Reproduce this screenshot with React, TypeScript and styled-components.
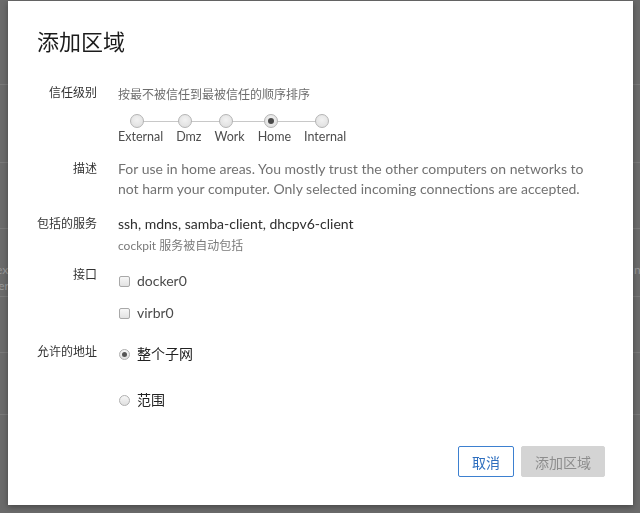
import styled, { createGlobalStyle } from "styled-components";

const GlobalStyle = createGlobalStyle`
  html, body {
    margin: 0;
    padding: 0;
    width: 640px;
    height: 513px;
    overflow: hidden;
  }
  body {
    font-family: Lato, "Noto Sans CJK SC", sans-serif;
  }
`;

const zones = ["External", "Dmz", "Work", "Home", "Internal"];
const selectedZone = "Home";

type FieldProps = {
  label: string;
  top: number;
  labelShift?: number;
  children: React.ReactNode;
};

const Field = ({ label, top, labelShift = 0, children }: FieldProps) => (
  <StyledFieldRow $top={top}>
    <StyledFieldLabel $shift={labelShift}>{label}</StyledFieldLabel>
    <StyledFieldValue>{children}</StyledFieldValue>
  </StyledFieldRow>
);

const App = () => {
  return (
    <>
      <GlobalStyle />
      <StyledBackdrop>
        {[84, 162, 228, 296, 352, 414].map((y) => (
          <StyledBackdropLine key={y} $y={y} />
        ))}
        <StyledBackdropText $y={262} $left={-4}>exe</StyledBackdropText>
        <StyledBackdropText $y={278} $left={-6}>ter</StyledBackdropText>
        <StyledBackdropText $y={262} $left={634}>n</StyledBackdropText>
      </StyledBackdrop>

      <StyledModal>
        <StyledTitle>添加区域</StyledTitle>

        <StyledForm>
          <Field label="信任级别" top={0} labelShift={-2}>
            <StyledHint>按最不被信任到最被信任的顺序排序</StyledHint>
            <StyledSlider>
              {zones.map((zone) => (
                <StyledStep key={zone}>
                  <StyledStepDot $active={zone === selectedZone} />
                  <StyledStepLabel>{zone}</StyledStepLabel>
                </StyledStep>
              ))}
            </StyledSlider>
          </Field>

          <Field label="描述" top={14} labelShift={1}>
            <StyledDescription>
              For use in home areas. You mostly trust the other computers on networks to
              not harm your computer. Only selected incoming connections are accepted.
            </StyledDescription>
          </Field>

          <Field label="包括的服务" top={15} labelShift={1}>
            <StyledServices>ssh, mdns, samba-client, dhcpv6-client</StyledServices>
            <StyledSmallHint>cockpit 服务被自动包括</StyledSmallHint>
          </Field>

          <Field label="接口" top={16} labelShift={-5}>
            <StyledOptionList $gap={12}>
              <StyledOption>
                <StyledCheckbox />
                docker0
              </StyledOption>
              <StyledOption>
                <StyledCheckbox />
                virbr0
              </StyledOption>
            </StyledOptionList>
          </Field>

          <Field label="允许的地址" top={21} labelShift={-1}>
            <StyledOptionList $gap={26}>
              <StyledOption $dark>
                <StyledRadio $checked />
                整个子网
              </StyledOption>
              <StyledOption $dark>
                <StyledRadio />
                范围
              </StyledOption>
            </StyledOptionList>
          </Field>
        </StyledForm>

        <StyledFooter>
          <StyledButton $variant="secondary">取消</StyledButton>
          <StyledButton $variant="disabled">添加区域</StyledButton>
        </StyledFooter>
      </StyledModal>
    </>
  );
};

const StyledBackdrop = styled.div`
  position: fixed;
  inset: 0;
  background: #6b6b6b;
  overflow: hidden;
`;

const StyledBackdropLine = styled.div<{ $y: number }>`
  position: absolute;
  left: 0;
  right: 0;
  top: ${(p) => p.$y}px;
  height: 1px;
  background: #7a7a7a;
`;

const StyledBackdropText = styled.span<{ $y: number; $left: number }>`
  position: absolute;
  top: ${(p) => p.$y}px;
  left: ${(p) => p.$left}px;
  font-size: 12px;
  color: #9a9a9a;
`;

const StyledModal = styled.div`
  position: absolute;
  left: 8px;
  top: 1px;
  width: 625px;
  height: 504px;
  box-sizing: border-box;
  background: #fff;
  box-shadow: 0 2px 6px rgba(0, 0, 0, 0.35);
  padding: 26px 28px 0 29px;
  display: flex;
  flex-direction: column;
`;

const StyledTitle = styled.h1`
  margin: 0;
  font-size: 22px;
  line-height: 30px;
  font-weight: 400;
  color: #1b1b1b;
`;

const StyledForm = styled.div`
  margin-top: 29px;
  display: flex;
  flex-direction: column;
`;

const StyledFieldRow = styled.div<{ $top: number }>`
  display: grid;
  grid-template-columns: 60px 1fr;
  column-gap: 21px;
  align-items: start;
  margin-top: ${(p) => p.$top}px;
`;

const StyledFieldLabel = styled.div<{ $shift: number }>`
  text-align: right;
  white-space: nowrap;
  font-size: 12px;
  line-height: 18px;
  color: #333;
  margin-top: ${(p) => p.$shift}px;
`;

const StyledFieldValue = styled.div`
  display: flex;
  flex-direction: column;
  align-items: flex-start;
`;

const StyledHint = styled.div`
  font-size: 12px;
  line-height: 18px;
  color: #6d6d6d;
`;

const StyledSlider = styled.div`
  position: relative;
  display: flex;
  gap: 13px;
  margin-top: 10px;
  &::before {
    content: "";
    position: absolute;
    left: 19px;
    right: 24px;
    top: 7px;
    height: 1px;
    background: #c8c8c8;
  }
`;

const StyledStep = styled.div`
  position: relative;
  display: flex;
  flex-direction: column;
  align-items: center;
`;

const StyledStepDot = styled.span<{ $active: boolean }>`
  position: relative;
  box-sizing: border-box;
  width: 14px;
  height: 14px;
  margin-right: 7px;
  border-radius: 50%;
  border: 1px solid #b4b4b4;
  background: radial-gradient(circle at 50% 40%, #f2f2f2 0%, #dcdcdc 100%);
  display: flex;
  align-items: center;
  justify-content: center;
  &::after {
    content: "";
    display: ${(p) => (p.$active ? "block" : "none")};
    width: 6px;
    height: 6px;
    border-radius: 50%;
    background: #4a4a4a;
  }
`;

const StyledStepLabel = styled.span`
  margin-top: 1px;
  font-size: 12.5px;
  line-height: 16px;
  color: #4d4d4d;
`;

const StyledDescription = styled.p`
  margin: 0;
  font-size: 14px;
  line-height: 20px;
  color: #727272;
  max-width: 480px;
`;

const StyledServices = styled.div`
  font-size: 14px;
  line-height: 20px;
  color: #2e2e2e;
`;

const StyledSmallHint = styled.div`
  margin-top: 3px;
  font-size: 12px;
  line-height: 18px;
  color: #7a7a7a;
`;

const StyledOptionList = styled.div<{ $gap: number }>`
  display: flex;
  flex-direction: column;
  gap: ${(p) => p.$gap}px;
`;

const StyledOption = styled.label<{ $dark?: boolean }>`
  display: flex;
  align-items: center;
  gap: 7px;
  font-size: 14px;
  line-height: 20px;
  color: ${(p) => (p.$dark ? "#222" : "#4a4a4a")};
`;

const StyledCheckbox = styled.span`
  box-sizing: border-box;
  width: 11px;
  height: 11px;
  margin-left: 1px;
  border: 1px solid #a8a8a8;
  border-radius: 2px;
  background: linear-gradient(#f7f7f7, #e2e2e2);
`;

const StyledRadio = styled.span<{ $checked?: boolean }>`
  box-sizing: border-box;
  width: 11px;
  height: 11px;
  margin-left: 1px;
  border: 1px solid #b0b0b0;
  border-radius: 50%;
  background: linear-gradient(#f7f7f7, #e0e0e0);
  display: flex;
  align-items: center;
  justify-content: center;
  &::after {
    content: "";
    display: ${(p) => (p.$checked ? "block" : "none")};
    width: 5px;
    height: 5px;
    border-radius: 50%;
    background: #555;
  }
`;

const StyledFooter = styled.div`
  margin-top: auto;
  margin-bottom: 28px;
  display: flex;
  justify-content: flex-end;
  gap: 7px;
`;

const StyledButton = styled.button<{ $variant: "secondary" | "disabled" }>`
  height: 31px;
  padding: 0 13px;
  font-family: inherit;
  font-size: 14px;
  border-radius: 2px;
  border: 1px solid ${(p) => (p.$variant === "secondary" ? "#3d80d0" : "#d4d4d4")};
  background: ${(p) => (p.$variant === "secondary" ? "#fff" : "#d4d4d4")};
  color: ${(p) => (p.$variant === "secondary" ? "#2f6fbf" : "#8d8d8d")};
`;

export default App;
